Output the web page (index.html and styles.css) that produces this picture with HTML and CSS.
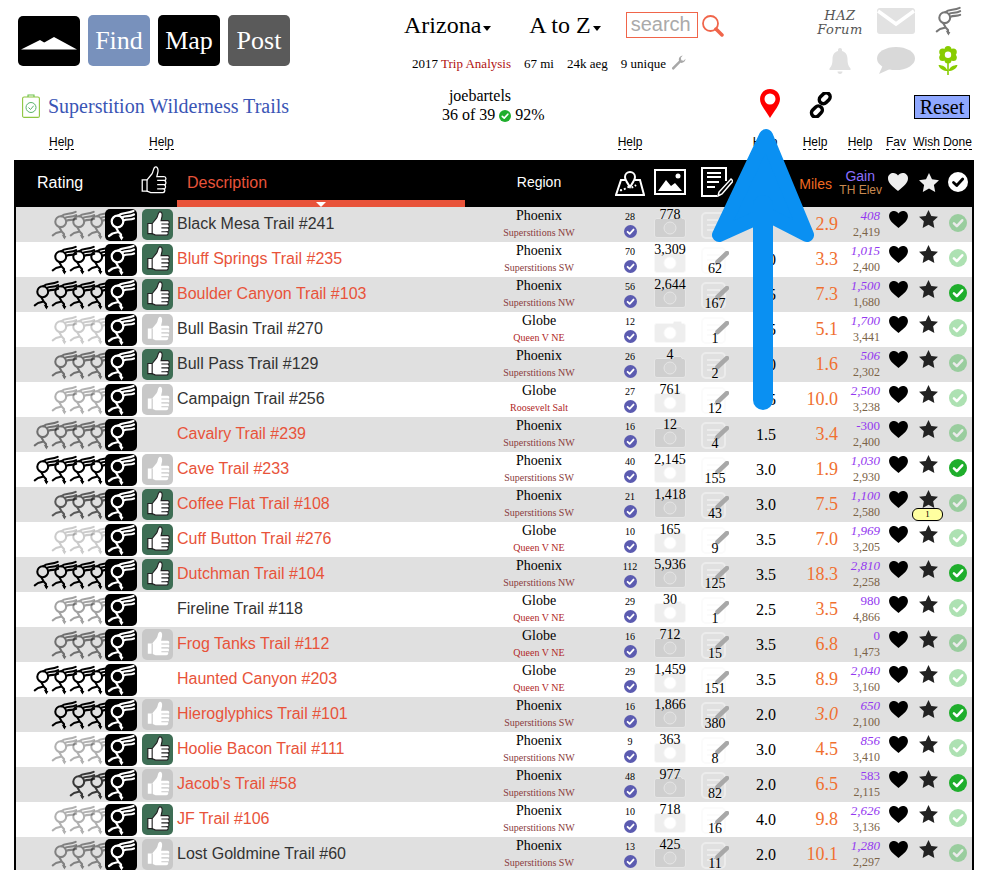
FILE: index.html
```html
<!DOCTYPE html>
<html lang="en">
<head>
<meta charset="utf-8">
<title>Superstition Wilderness Trails</title>
<link rel="stylesheet" href="styles.css">
</head>
<body>
<svg class="sprite" xmlns="http://www.w3.org/2000/svg">
  <symbol id="runner" viewBox="0 0 32 32"><g fill="none" stroke="currentColor" stroke-width="2.200" stroke-linecap="round" stroke-linejoin="round"><circle cx="12.500" cy="12.500" r="5.800"/><path d="M13 6.600C17 3 22 5 28.500 2M17 8.500C21 6 24 8.500 29 5.500M18.500 11.500C22 9.500 25 11.500 29 9.500M11 18.500l2.500 4.500-6 1.500-3.500 2.500M13.500 23l2.500 2.500v3"/></g><path d="M13.500 26l5 2-2 3.500z" fill="currentColor"/></symbol>
  <symbol id="thumb" viewBox="0 0 32 32"><path d="M6 15h4.500l4.500-5.500c1.500-2 1.200-5.500 3-6.500 2-.5 3.200 1.500 2.700 4.500l-1 4.500h6.800c2.200 0 2.200 3.500.3 3.800 2 .4 1.800 3.700-.1 4 1.700.4 1.500 3.500-.3 3.700 1.200.5 1 3.500-1.200 3.500H14l-3.500-1.500H6z" fill="var(--tf,#fff)" stroke="var(--ts,none)" stroke-width="1.200"/><path d="M20 15.500h7.500M20 19.500h7.500M20 23.500h7M10.500 15v11" fill="none" stroke="var(--tl,#222)" stroke-width="1.200"/></symbol>
  <symbol id="check" viewBox="0 0 20 20"><circle cx="10" cy="10" r="10" fill="currentColor"/><path d="M5.500 10.500l3.200 3L14.700 7" fill="none" stroke="var(--tick,#fff)" stroke-width="2.800" stroke-linecap="round" stroke-linejoin="round"/></symbol>
  <symbol id="heart" viewBox="0 0 20 18"><path d="M10 18C4 13 0 10 0 5.300 0 2 2.500 0 5.300 0 7.300 0 9 1 10 2.600 11 1 12.700 0 14.700 0 17.500 0 20 2 20 5.300 20 10 16 13 10 18z" fill="currentColor"/></symbol>
  <symbol id="star" viewBox="0 0 20 19"><path d="M10 0l3 6.300 7 .9-5.100 4.800 1.300 6.900L10 15.600l-6.200 3.300L5.100 12 0 7.200l7-.9z" fill="currentColor"/></symbol>
  <symbol id="camera" viewBox="0 0 32 22"><path d="M3 2.500h16l1-2h7l1 2h1c1.500 0 2.500 1 2.500 2.500v14c0 1.500-1 2.500-2.500 2.500H3c-1.500 0-2.500-1-2.500-2.500V5C.5 3.500 1.500 2.500 3 2.500z" fill="var(--cam)" stroke="var(--camline)"/><circle cx="16" cy="12" r="6" fill="var(--lens)" stroke="var(--camline)"/></symbol>
  <symbol id="doc" viewBox="0 0 25 27"><rect x="1" y="1" width="23" height="25" rx="4" fill="none" stroke="var(--docc)" stroke-width="2"/><path d="M6 8h13M6 13h13M6 18h9" stroke="var(--docc)" stroke-width="2"/></symbol>
  <symbol id="pencil" viewBox="0 0 16 14"><path d="M14 2L4.500 11" stroke="#a8a8a8" stroke-width="4.500" stroke-linecap="round"/><path d="M2 11.500L.5 13.500l2.500-1z" fill="#a8a8a8"/></symbol>
</svg>

<header class="top">
  <nav class="nav">
    <a class="tile logo"><svg viewBox="0 0 62 50" width="62" height="50"><path d="M3 33.500L22 24l5 3-9 6.500zM14 33.500L36 21l23 12.500z" fill="#fff"/></svg></a>
    <a class="tile find">Find</a>
    <a class="tile map">Map</a>
    <a class="tile post">Post</a>
  </nav>
  <div class="mid">
    <div class="pickers">
      <span class="picker first">Arizona<i class="caret"></i></span>
      <span class="picker">A to Z<i class="caret"></i></span>
      <span class="search">search</span>
      <svg class="lens" viewBox="0 0 22 22" width="22" height="22"><circle cx="8.500" cy="8.500" r="7.500" fill="none" stroke="#f0654a" stroke-width="1.800"/><path d="M14 14L20 20" stroke="#f0654a" stroke-width="3.500" stroke-linecap="round"/></svg>
    </div>
    <div class="stats">
      <span>2017 <em>Trip Analysis</em></span><span>67 mi</span><span>24k aeg</span>
      <span class="uniq">9 unique <svg viewBox="0 0 16 16" width="15" height="15"><path d="M1.500 13l7-7c-.7-2.500.7-5 4-5.500L10.500 3l.5 2.500 2.500.5 2-2c-.2 3-2.800 5-5.500 4.300l-7 7.200c-1 .8-2.900-1-1.500-2.500z" fill="#a8a8a8"/></svg></span>
    </div>
  </div>
  <div class="tools">
    <a class="forum">HAZ<br>Forum</a>
    <svg viewBox="0 0 38 26" width="38" height="26"><rect width="38" height="26" rx="3" fill="#e2e2e2"/><path d="M1 3l18 13L37 3" fill="none" stroke="#fff" stroke-width="3.500"/></svg>
    <svg class="gray-run" viewBox="0 0 32 32" width="30" height="30"><use href="#runner"/></svg>
    <svg class="bell" viewBox="0 0 22 26" width="22" height="26"><path d="M11 0c1.200 0 2 .8 2 2v1c4 1 5.500 4.500 5.500 8 0 5 1 7 3 9.500v1.500H.5v-1.500c2-2.500 3-4.500 3-9.500 0-3.500 1.500-7 5.500-8V2c0-1.200.8-2 2-2zM8.500 23.500h5c0 1.500-1 2.500-2.500 2.500s-2.500-1-2.500-2.500z" fill="#e0e0e0"/></svg>
    <svg viewBox="0 0 38 27" width="38" height="27"><ellipse cx="19" cy="11.500" rx="19" ry="11.500" fill="#d9d9d9"/><path d="M6 18l-4 9 11-5z" fill="#d9d9d9"/></svg>
    <svg class="flower" viewBox="0 0 20 29" width="20" height="29"><g fill="#88cc00"><circle cx="10" cy="3.500" r="3.500"/><circle cx="10" cy="14" r="3.500"/><circle cx="4.700" cy="6" r="3.500"/><circle cx="15.300" cy="6" r="3.500"/><circle cx="4.700" cy="11.500" r="3.500"/><circle cx="15.300" cy="11.500" r="3.500"/><path d="M9.200 15h1.600v14H9.200zM9.500 25C6 25 1.500 23 .5 19c4 0 8 2 9 6zM10.500 25c3.500 0 8-2 9-6-4 0-8 2-9 6z"/></g><circle cx="10" cy="8.700" r="3.200" fill="#fff"/></svg>
  </div>
</header>

<section class="titlebar">
  <h1 class="title">
    <svg viewBox="0 0 18 24" width="18" height="24"><rect x=".6" y="3" width="16.800" height="20.400" rx="1.500" fill="none" stroke="#8ec63f" stroke-width="1.100"/><path d="M6 3V1h6v2" fill="none" stroke="#6cc24a" stroke-width="1.100"/><circle cx="9" cy="13.500" r="5" fill="none" stroke="#5ab36a" stroke-width="1"/><path d="M6.500 13.500l2 2 3.200-3.800" fill="none" stroke="#5ab36a" stroke-width="1"/></svg>
    <span>Superstition Wilderness Trails</span>
  </h1>
  <div class="user"><span class="uname">joebartels</span><span class="ustat">36 of 39 <svg viewBox="0 0 20 20" width="12" height="12"><use href="#check"/></svg> 92%</span></div>
  <svg class="pin" viewBox="0 0 20 29" width="20" height="29"><path fill-rule="evenodd" d="M10 0c5.700 0 10 4.300 10 10 0 6-6 12-10 19C6 22 0 16 0 10 0 4.300 4.300 0 10 0zm0 4.500a5.500 5.500 0 1 0 0 11 5.500 5.500 0 0 0 0-11z" fill="#f00"/></svg>
  <svg class="chain" viewBox="0 0 26 26" width="26" height="26"><g fill="none" stroke="#000" stroke-width="3.500"><rect x="12.500" y="1.500" width="12" height="8" rx="4" transform="rotate(-45 18.500 8)"/><rect x="1.500" y="16" width="12" height="8" rx="4" transform="rotate(-45 7.500 18)"/></g></svg>
  <button class="reset">Reset</button>
</section>

<div class="helps grid">
  <a class="help h-rate">Help</a><a class="help h-thumb">Help</a><span></span><span></span>
  <a class="help">Help</a><span></span><span></span>
  <a class="help">Help</a><a class="help h-mile">Help</a><a class="help">Help</a>
  <a class="help h-fav">Fav</a><a class="help h-fav">Wish</a><a class="help">Done</a>
</div>

<main class="table">
  <div class="head grid">
    <span class="th-rate">Rating</span>
    <svg class="th-thumb" viewBox="5 2 25 30" width="27" height="32"><use href="#thumb" width="32" height="32"/></svg>
    <span class="th-desc">Description</span>
    <span class="th-region">Region</span>
    <svg class="th-ico" viewBox="0 0 30 30" width="30" height="30"><g fill="none" stroke="#fff" stroke-width="2"><path d="M10 13L6 13 1 28h28l-4-15h-5"/><path d="M5 23c4 1 6-3 9-3s4 1 7-2" stroke-dasharray="2 2"/><path d="M15 20c-3-5-5-7-5-10a5 5 0 0 1 10 0c0 3-2 5-5 10z"/></g></svg>
    <svg class="th-ico" viewBox="0 0 32 26" width="32" height="26"><rect x="1" y="1" width="30" height="24" fill="none" stroke="#fff" stroke-width="2"/><path d="M4 22l8-11 5 6 4-3 7 8z" fill="#fff"/><circle cx="24" cy="7" r="2.500" fill="#fff"/></svg>
    <svg class="th-ico th-note" viewBox="0 0 32 30" width="32" height="30"><path d="M25 14V1H1v28h15" fill="none" stroke="#fff" stroke-width="2"/><path d="M6 6h14M6 10h14M6 15h12M6 20h8" stroke="#fff" stroke-width="2"/><path d="M30 12l2 2-11 13-4 2 1-4z" fill="#000" stroke="#fff" stroke-width="1.500"/></svg>
    <span></span>
    <span class="th-miles">Miles</span>
    <span class="th-gain"><b>Gain</b><small>TH Elev</small></span>
    <svg class="th-fav" viewBox="0 0 20 18" width="20" height="18"><use href="#heart"/></svg>
    <svg class="th-fav" viewBox="0 0 20 19" width="20" height="19"><use href="#star"/></svg>
    <svg class="th-done" viewBox="0 0 20 20" width="20" height="20"><use href="#check"/></svg>
  </div>

  <div class="row grid"><div class="rating o45"><svg class="run"><use href="#runner"/></svg><svg class="run"><use href="#runner"/></svg><svg class="run"><use href="#runner"/></svg><svg class="box"><use href="#runner"/></svg></div><div class="tcell"><svg class="thumb up"><use href="#thumb"/></svg></div><a class="name">Black Mesa Trail #241</a><div class="region"><b>Phoenix</b><span>Superstitions NW</span></div><div class="count"><span>28</span><svg class="ok"><use href="#check"/></svg></div><div class="photo"><svg class="cam"><use href="#camera"/></svg><span>778</span></div><div class="rep"><svg class="doc"><use href="#doc"/></svg></div><div class="rate"></div><div class="miles">2.9</div><div class="gain"><i>408</i><span>2,419</span></div><div class="fav"><svg class="heart"><use href="#heart"/></svg></div><div class="fav"><svg class="star"><use href="#star"/></svg></div><div class="done"><svg class="tick soft"><use href="#check"/></svg></div></div>

  <div class="row grid"><div class="rating"><svg class="run"><use href="#runner"/></svg><svg class="run"><use href="#runner"/></svg><svg class="run"><use href="#runner"/></svg><svg class="box"><use href="#runner"/></svg></div><div class="tcell"><svg class="thumb up"><use href="#thumb"/></svg></div><a class="name hot">Bluff Springs Trail #235</a><div class="region"><b>Phoenix</b><span>Superstitions SW</span></div><div class="count"><span>70</span><svg class="ok"><use href="#check"/></svg></div><div class="photo"><svg class="cam"><use href="#camera"/></svg><span>3,309</span></div><div class="rep"><svg class="doc"><use href="#doc"/></svg><svg class="pen"><use href="#pencil"/></svg><span>62</span></div><div class="rate">3.0</div><div class="miles">3.3</div><div class="gain"><i>1,015</i><span>2,400</span></div><div class="fav"><svg class="heart"><use href="#heart"/></svg></div><div class="fav"><svg class="star"><use href="#star"/></svg></div><div class="done"><svg class="tick soft"><use href="#check"/></svg></div></div>

  <div class="row grid"><div class="rating"><svg class="run"><use href="#runner"/></svg><svg class="run"><use href="#runner"/></svg><svg class="run"><use href="#runner"/></svg><svg class="run"><use href="#runner"/></svg><svg class="box"><use href="#runner"/></svg></div><div class="tcell"><svg class="thumb up"><use href="#thumb"/></svg></div><a class="name hot">Boulder Canyon Trail #103</a><div class="region"><b>Phoenix</b><span>Superstitions NW</span></div><div class="count"><span>56</span><svg class="ok"><use href="#check"/></svg></div><div class="photo"><svg class="cam"><use href="#camera"/></svg><span>2,644</span></div><div class="rep"><svg class="doc"><use href="#doc"/></svg><svg class="pen"><use href="#pencil"/></svg><span>167</span></div><div class="rate">2.5</div><div class="miles">7.3</div><div class="gain"><i>1,500</i><span>1,680</span></div><div class="fav"><svg class="heart"><use href="#heart"/></svg></div><div class="fav"><svg class="star"><use href="#star"/></svg></div><div class="done"><svg class="tick"><use href="#check"/></svg></div></div>

  <div class="row grid"><div class="rating o20"><svg class="run"><use href="#runner"/></svg><svg class="run"><use href="#runner"/></svg><svg class="run"><use href="#runner"/></svg><svg class="box"><use href="#runner"/></svg></div><div class="tcell"><svg class="thumb no"><use href="#thumb"/></svg></div><a class="name">Bull Basin Trail #270</a><div class="region"><b>Globe</b><span class="red">Queen V NE</span></div><div class="count"><span>12</span><svg class="ok"><use href="#check"/></svg></div><div class="photo"><svg class="cam"><use href="#camera"/></svg></div><div class="rep"><svg class="doc"><use href="#doc"/></svg><svg class="pen"><use href="#pencil"/></svg><span>1</span></div><div class="rate">2.5</div><div class="miles">5.1</div><div class="gain"><i>1,700</i><span>3,441</span></div><div class="fav"><svg class="heart"><use href="#heart"/></svg></div><div class="fav"><svg class="star"><use href="#star"/></svg></div><div class="done"><svg class="tick soft"><use href="#check"/></svg></div></div>

  <div class="row grid"><div class="rating o50"><svg class="run"><use href="#runner"/></svg><svg class="run"><use href="#runner"/></svg><svg class="run"><use href="#runner"/></svg><svg class="box"><use href="#runner"/></svg></div><div class="tcell"><svg class="thumb up"><use href="#thumb"/></svg></div><a class="name">Bull Pass Trail #129</a><div class="region"><b>Phoenix</b><span>Superstitions NW</span></div><div class="count"><span>26</span><svg class="ok"><use href="#check"/></svg></div><div class="photo"><svg class="cam"><use href="#camera"/></svg><span>4</span></div><div class="rep"><svg class="doc"><use href="#doc"/></svg><svg class="pen"><use href="#pencil"/></svg><span>2</span></div><div class="rate">3.0</div><div class="miles">1.6</div><div class="gain"><i>506</i><span>2,302</span></div><div class="fav"><svg class="heart"><use href="#heart"/></svg></div><div class="fav"><svg class="star"><use href="#star"/></svg></div><div class="done"><svg class="tick soft"><use href="#check"/></svg></div></div>

  <div class="row grid"><div class="rating o30"><svg class="run"><use href="#runner"/></svg><svg class="run"><use href="#runner"/></svg><svg class="run"><use href="#runner"/></svg><svg class="box"><use href="#runner"/></svg></div><div class="tcell"><svg class="thumb no"><use href="#thumb"/></svg></div><a class="name">Campaign Trail #256</a><div class="region"><b>Globe</b><span class="red">Roosevelt Salt</span></div><div class="count"><span>27</span><svg class="ok"><use href="#check"/></svg></div><div class="photo"><svg class="cam"><use href="#camera"/></svg><span>761</span></div><div class="rep"><svg class="doc"><use href="#doc"/></svg><svg class="pen"><use href="#pencil"/></svg><span>12</span></div><div class="rate">4.5</div><div class="miles">10.0</div><div class="gain"><i>2,500</i><span>3,238</span></div><div class="fav"><svg class="heart"><use href="#heart"/></svg></div><div class="fav"><svg class="star"><use href="#star"/></svg></div><div class="done"><svg class="tick soft"><use href="#check"/></svg></div></div>

  <div class="row grid"><div class="rating o50"><svg class="run"><use href="#runner"/></svg><svg class="run"><use href="#runner"/></svg><svg class="run"><use href="#runner"/></svg><svg class="run"><use href="#runner"/></svg><svg class="box"><use href="#runner"/></svg></div><div class="tcell"></div><a class="name hot">Cavalry Trail #239</a><div class="region"><b>Phoenix</b><span>Superstitions NW</span></div><div class="count"><span>16</span><svg class="ok"><use href="#check"/></svg></div><div class="photo"><svg class="cam"><use href="#camera"/></svg><span>12</span></div><div class="rep"><svg class="doc"><use href="#doc"/></svg><svg class="pen"><use href="#pencil"/></svg><span>4</span></div><div class="rate">1.5</div><div class="miles">3.4</div><div class="gain"><i class="up">-300</i><span>2,400</span></div><div class="fav"><svg class="heart"><use href="#heart"/></svg></div><div class="fav"><svg class="star"><use href="#star"/></svg></div><div class="done"><svg class="tick soft"><use href="#check"/></svg></div></div>

  <div class="row grid"><div class="rating"><svg class="run"><use href="#runner"/></svg><svg class="run"><use href="#runner"/></svg><svg class="run"><use href="#runner"/></svg><svg class="run"><use href="#runner"/></svg><svg class="box"><use href="#runner"/></svg></div><div class="tcell"><svg class="thumb no"><use href="#thumb"/></svg></div><a class="name hot">Cave Trail #233</a><div class="region"><b>Phoenix</b><span>Superstitions SW</span></div><div class="count"><span>40</span><svg class="ok"><use href="#check"/></svg></div><div class="photo"><svg class="cam"><use href="#camera"/></svg><span>2,145</span></div><div class="rep"><svg class="doc"><use href="#doc"/></svg><svg class="pen"><use href="#pencil"/></svg><span>155</span></div><div class="rate">3.0</div><div class="miles">1.9</div><div class="gain"><i>1,030</i><span>2,930</span></div><div class="fav"><svg class="heart"><use href="#heart"/></svg></div><div class="fav"><svg class="star"><use href="#star"/></svg></div><div class="done"><svg class="tick"><use href="#check"/></svg></div></div>

  <div class="row grid"><div class="rating o60"><svg class="run"><use href="#runner"/></svg><svg class="run"><use href="#runner"/></svg><svg class="run"><use href="#runner"/></svg><svg class="box"><use href="#runner"/></svg></div><div class="tcell"><svg class="thumb up"><use href="#thumb"/></svg></div><a class="name hot">Coffee Flat Trail #108</a><div class="region"><b>Phoenix</b><span>Superstitions SW</span></div><div class="count"><span>21</span><svg class="ok"><use href="#check"/></svg></div><div class="photo"><svg class="cam"><use href="#camera"/></svg><span>1,418</span></div><div class="rep"><svg class="doc"><use href="#doc"/></svg><svg class="pen"><use href="#pencil"/></svg><span>43</span></div><div class="rate">3.0</div><div class="miles">7.5</div><div class="gain"><i>1,100</i><span>2,580</span></div><div class="fav"><svg class="heart"><use href="#heart"/></svg></div><div class="fav"><svg class="star"><use href="#star"/></svg><span class="badge">1</span></div><div class="done"><svg class="tick soft"><use href="#check"/></svg></div></div>

  <div class="row grid"><div class="rating o20"><svg class="run"><use href="#runner"/></svg><svg class="run"><use href="#runner"/></svg><svg class="run"><use href="#runner"/></svg><svg class="box"><use href="#runner"/></svg></div><div class="tcell"><svg class="thumb up"><use href="#thumb"/></svg></div><a class="name hot">Cuff Button Trail #276</a><div class="region"><b>Globe</b><span class="red">Queen V NE</span></div><div class="count"><span>10</span><svg class="ok"><use href="#check"/></svg></div><div class="photo"><svg class="cam"><use href="#camera"/></svg><span>165</span></div><div class="rep"><svg class="doc"><use href="#doc"/></svg><svg class="pen"><use href="#pencil"/></svg><span>9</span></div><div class="rate">3.5</div><div class="miles">7.0</div><div class="gain"><i>1,969</i><span>3,205</span></div><div class="fav"><svg class="heart"><use href="#heart"/></svg></div><div class="fav"><svg class="star"><use href="#star"/></svg></div><div class="done"><svg class="tick soft"><use href="#check"/></svg></div></div>

  <div class="row grid"><div class="rating"><svg class="run"><use href="#runner"/></svg><svg class="run"><use href="#runner"/></svg><svg class="run"><use href="#runner"/></svg><svg class="run"><use href="#runner"/></svg><svg class="box"><use href="#runner"/></svg></div><div class="tcell"><svg class="thumb up"><use href="#thumb"/></svg></div><a class="name hot">Dutchman Trail #104</a><div class="region"><b>Phoenix</b><span>Superstitions NW</span></div><div class="count"><span>112</span><svg class="ok"><use href="#check"/></svg></div><div class="photo"><svg class="cam"><use href="#camera"/></svg><span>5,936</span></div><div class="rep"><svg class="doc"><use href="#doc"/></svg><svg class="pen"><use href="#pencil"/></svg><span>125</span></div><div class="rate">3.5</div><div class="miles">18.3</div><div class="gain"><i>2,810</i><span>2,258</span></div><div class="fav"><svg class="heart"><use href="#heart"/></svg></div><div class="fav"><svg class="star"><use href="#star"/></svg></div><div class="done"><svg class="tick"><use href="#check"/></svg></div></div>

  <div class="row grid"><div class="rating o35"><svg class="run"><use href="#runner"/></svg><svg class="run"><use href="#runner"/></svg><svg class="run"><use href="#runner"/></svg><svg class="box"><use href="#runner"/></svg></div><div class="tcell"></div><a class="name">Fireline Trail #118</a><div class="region"><b>Globe</b><span class="red">Queen V NE</span></div><div class="count"><span>29</span><svg class="ok"><use href="#check"/></svg></div><div class="photo"><svg class="cam"><use href="#camera"/></svg><span>30</span></div><div class="rep"><svg class="doc"><use href="#doc"/></svg><svg class="pen"><use href="#pencil"/></svg><span>1</span></div><div class="rate">2.5</div><div class="miles">3.5</div><div class="gain"><i class="up">980</i><span>4,866</span></div><div class="fav"><svg class="heart"><use href="#heart"/></svg></div><div class="fav"><svg class="star"><use href="#star"/></svg></div><div class="done"><svg class="tick soft"><use href="#check"/></svg></div></div>

  <div class="row grid"><div class="rating o50"><svg class="run"><use href="#runner"/></svg><svg class="run"><use href="#runner"/></svg><svg class="run"><use href="#runner"/></svg><svg class="box"><use href="#runner"/></svg></div><div class="tcell"><svg class="thumb no"><use href="#thumb"/></svg></div><a class="name hot">Frog Tanks Trail #112</a><div class="region"><b>Globe</b><span class="red">Queen V NE</span></div><div class="count"><span>16</span><svg class="ok"><use href="#check"/></svg></div><div class="photo"><svg class="cam"><use href="#camera"/></svg><span>712</span></div><div class="rep"><svg class="doc"><use href="#doc"/></svg><svg class="pen"><use href="#pencil"/></svg><span>15</span></div><div class="rate">3.5</div><div class="miles">6.8</div><div class="gain"><i class="up">0</i><span>1,473</span></div><div class="fav"><svg class="heart"><use href="#heart"/></svg></div><div class="fav"><svg class="star"><use href="#star"/></svg></div><div class="done"><svg class="tick soft"><use href="#check"/></svg></div></div>

  <div class="row grid"><div class="rating"><svg class="run"><use href="#runner"/></svg><svg class="run"><use href="#runner"/></svg><svg class="run"><use href="#runner"/></svg><svg class="run"><use href="#runner"/></svg><svg class="box"><use href="#runner"/></svg></div><div class="tcell"></div><a class="name hot">Haunted Canyon #203</a><div class="region"><b>Globe</b><span class="red">Queen V NE</span></div><div class="count"><span>29</span><svg class="ok"><use href="#check"/></svg></div><div class="photo"><svg class="cam"><use href="#camera"/></svg><span>1,459</span></div><div class="rep"><svg class="doc"><use href="#doc"/></svg><svg class="pen"><use href="#pencil"/></svg><span>151</span></div><div class="rate">3.5</div><div class="miles">8.9</div><div class="gain"><i>2,040</i><span>3,160</span></div><div class="fav"><svg class="heart"><use href="#heart"/></svg></div><div class="fav"><svg class="star"><use href="#star"/></svg></div><div class="done"><svg class="tick soft"><use href="#check"/></svg></div></div>

  <div class="row grid"><div class="rating"><svg class="run"><use href="#runner"/></svg><svg class="run"><use href="#runner"/></svg><svg class="run"><use href="#runner"/></svg><svg class="box"><use href="#runner"/></svg></div><div class="tcell"><svg class="thumb no"><use href="#thumb"/></svg></div><a class="name hot">Hieroglyphics Trail #101</a><div class="region"><b>Phoenix</b><span>Superstitions SW</span></div><div class="count"><span>16</span><svg class="ok"><use href="#check"/></svg></div><div class="photo"><svg class="cam"><use href="#camera"/></svg><span>1,866</span></div><div class="rep"><svg class="doc"><use href="#doc"/></svg><svg class="pen"><use href="#pencil"/></svg><span>380</span></div><div class="rate">2.0</div><div class="miles it">3.0</div><div class="gain"><i>650</i><span>2,100</span></div><div class="fav"><svg class="heart"><use href="#heart"/></svg></div><div class="fav"><svg class="star"><use href="#star"/></svg></div><div class="done"><svg class="tick"><use href="#check"/></svg></div></div>

  <div class="row grid"><div class="rating o30"><svg class="run"><use href="#runner"/></svg><svg class="run"><use href="#runner"/></svg><svg class="run"><use href="#runner"/></svg><svg class="box"><use href="#runner"/></svg></div><div class="tcell"><svg class="thumb up"><use href="#thumb"/></svg></div><a class="name hot">Hoolie Bacon Trail #111</a><div class="region"><b>Phoenix</b><span>Superstitions NW</span></div><div class="count"><span>9</span><svg class="ok"><use href="#check"/></svg></div><div class="photo"><svg class="cam"><use href="#camera"/></svg><span>363</span></div><div class="rep"><svg class="doc"><use href="#doc"/></svg><svg class="pen"><use href="#pencil"/></svg><span>8</span></div><div class="rate">3.0</div><div class="miles">4.5</div><div class="gain"><i>856</i><span>3,410</span></div><div class="fav"><svg class="heart"><use href="#heart"/></svg></div><div class="fav"><svg class="star"><use href="#star"/></svg></div><div class="done"><svg class="tick soft"><use href="#check"/></svg></div></div>

  <div class="row grid"><div class="rating o75"><svg class="run"><use href="#runner"/></svg><svg class="run"><use href="#runner"/></svg><svg class="box"><use href="#runner"/></svg></div><div class="tcell"><svg class="thumb no"><use href="#thumb"/></svg></div><a class="name hot">Jacob's Trail #58</a><div class="region"><b>Phoenix</b><span>Superstitions NW</span></div><div class="count"><span>48</span><svg class="ok"><use href="#check"/></svg></div><div class="photo"><svg class="cam"><use href="#camera"/></svg><span>977</span></div><div class="rep"><svg class="doc"><use href="#doc"/></svg><svg class="pen"><use href="#pencil"/></svg><span>82</span></div><div class="rate">2.0</div><div class="miles">6.5</div><div class="gain"><i class="up">583</i><span>2,115</span></div><div class="fav"><svg class="heart"><use href="#heart"/></svg></div><div class="fav"><svg class="star"><use href="#star"/></svg></div><div class="done"><svg class="tick"><use href="#check"/></svg></div></div>

  <div class="row grid"><div class="rating o30"><svg class="run"><use href="#runner"/></svg><svg class="run"><use href="#runner"/></svg><svg class="run"><use href="#runner"/></svg><svg class="box"><use href="#runner"/></svg></div><div class="tcell"><svg class="thumb up"><use href="#thumb"/></svg></div><a class="name hot">JF Trail #106</a><div class="region"><b>Phoenix</b><span>Superstitions NW</span></div><div class="count"><span>10</span><svg class="ok"><use href="#check"/></svg></div><div class="photo"><svg class="cam"><use href="#camera"/></svg><span>718</span></div><div class="rep"><svg class="doc"><use href="#doc"/></svg><svg class="pen"><use href="#pencil"/></svg><span>16</span></div><div class="rate">4.0</div><div class="miles">9.8</div><div class="gain"><i>2,626</i><span>3,136</span></div><div class="fav"><svg class="heart"><use href="#heart"/></svg></div><div class="fav"><svg class="star"><use href="#star"/></svg></div><div class="done"><svg class="tick soft"><use href="#check"/></svg></div></div>

  <div class="row grid"><div class="rating o45"><svg class="run"><use href="#runner"/></svg><svg class="run"><use href="#runner"/></svg><svg class="run"><use href="#runner"/></svg><svg class="box"><use href="#runner"/></svg></div><div class="tcell"><svg class="thumb no"><use href="#thumb"/></svg></div><a class="name">Lost Goldmine Trail #60</a><div class="region"><b>Phoenix</b><span>Superstitions SW</span></div><div class="count"><span>13</span><svg class="ok"><use href="#check"/></svg></div><div class="photo"><svg class="cam"><use href="#camera"/></svg><span>425</span></div><div class="rep"><svg class="doc"><use href="#doc"/></svg><svg class="pen"><use href="#pencil"/></svg><span>11</span></div><div class="rate">2.0</div><div class="miles">10.1</div><div class="gain"><i>1,280</i><span>2,297</span></div><div class="fav"><svg class="heart"><use href="#heart"/></svg></div><div class="fav"><svg class="star"><use href="#star"/></svg></div><div class="done"><svg class="tick soft"><use href="#check"/></svg></div></div>
</main>

<svg class="arrow" viewBox="0 0 988 870" width="988" height="870"><path d="M766 136L807 235 766 214 719 235z" fill="#0a90f2" stroke="#0a90f2" stroke-width="14" stroke-linejoin="round"/><path d="M763 205V400" fill="none" stroke="#0a90f2" stroke-width="20" stroke-linecap="round"/></svg>
</body>
</html>
```
FILE: styles.css
```css
* { box-sizing: border-box; }
html { overflow: hidden; }
body {
  margin: 0;
  position: relative;
  background: #fff;
  color: #000;
  font-family: "Liberation Serif", serif;
}
.sprite { display: none; }
.arrow { position: absolute; left: 0; top: 0; pointer-events: none; }

/* Top bar */
.top {
  display: grid;
  grid-template-columns: 404px 424px 1fr;
  height: 85px;
}
.nav { display: flex; gap: 8px; padding: 15px 0 0 18px; align-items: flex-start; }
.tile {
  width: 62px;
  height: 51px;
  border-radius: 5px;
  color: #fff;
  font-size: 26px;
  line-height: 51px;
  text-align: center;
}
.logo { background: #000; height: 50px; margin-top: 1px; display: block; line-height: 0; }
.find { background: #7891bc; }
.map { background: #000; }
.post { background: #5a5a5a; }

.pickers { display: flex; align-items: center; height: 26px; margin-top: 12px; }
.picker { font-size: 24px; line-height: 26px; display: flex; align-items: center; margin-right: 38px; }
.picker + .picker { margin-right: 25px; }
.caret {
  width: 0;
  height: 0;
  margin: 7px 0 0 2px;
  border-left: 4.5px solid transparent;
  border-right: 4.5px solid transparent;
  border-top: 5px solid #000;
}
.search {
  width: 72px;
  height: 26px;
  border: 1px solid #f0654a;
  font: 20px/23px "Liberation Sans", sans-serif;
  color: #aaa;
  padding-left: 4px;
}
.lens { margin: 2px 0 0 4px; }
.stats {
  display: flex;
  gap: 13px;
  align-items: center;
  margin: 17px 0 0 8px;
  font-size: 13px;
  line-height: 16px;
}
.stats em { font-style: normal; color: #b01010; }
.uniq svg { vertical-align: -2px; margin-left: 2px; }

.tools {
  display: grid;
  grid-template-columns: 49px 38px 66px;
  grid-template-rows: 26px 29px;
  row-gap: 12px;
  padding-top: 8px;
  justify-items: center;
  align-items: center;
}
.forum {
  font: italic 13px/14px "DejaVu Serif", serif;
  color: #555;
  text-align: center;
  white-space: nowrap;
  letter-spacing: .5px;
  margin: 3px 25px 0 0;
}
.bell { margin-right: 25px; }
.gray-run { color: #777; }
.flower { margin-top: -1px; }

/* Title row */
.titlebar {
  display: flex;
  height: 50px;
  align-items: flex-start;
}
.title {
  display: flex;
  align-items: center;
  gap: 8px;
  width: 420px;
  margin: 0;
  padding: 7px 0 0 22px;
  font-size: 20px;
  line-height: 28px;
  font-weight: normal;
  color: #3a55b5;
  white-space: nowrap;
}
.user { width: 120px; margin-top: 1px; font-size: 16px; line-height: 19px; text-align: center; white-space: nowrap; }
.uname, .ustat { display: block; }
.ustat { margin-left: 22px; text-align: left; }
.user svg { color: #1fae2c; vertical-align: -2px; }
.pin { margin: 4px 0 0 220px; }
.chain { margin: 7px 0 0 28px; }
.reset {
  width: 56px;
  height: 24px;
  margin: 10px 0 0 80px;
  padding: 0;
  background: #8fa8ff;
  border: 1px solid #000;
  font: 20px/22px "Liberation Serif", serif;
  color: #000;
}

/* Shared columns */
.grid {
  display: grid;
  grid-template-columns: 123px 36px 293px 142px 40px 40px 50px 50px 48px 44px 32px 29px 29px;
}

.helps {
  width: 960px;
  height: 25px;
  margin-left: 14px;
  padding: 0 2px;
  font: 12px/14px "Liberation Sans", sans-serif;
  justify-items: center;
  align-items: start;
}
.help { border-bottom: 1px dashed #000; color: #000; }
.h-rate { justify-self: start; margin-left: 33px; }
.h-thumb { justify-self: start; margin-left: 10px; }
.h-mile { margin-left: 2px; }
.h-fav { margin-right: 4px; }

/* Table */
.table {
  width: 960px;
  margin-left: 14px;
  border-left: 2px solid #000;
  border-right: 2px solid #000;
}
.head {
  height: 47px;
  margin: 0 -2px;
  padding: 0 2px;
  background: #000;
  color: #fff;
  font: 14px/16px "Liberation Sans", sans-serif;
  align-items: center;
}
.th-rate { font-size: 16px; padding: 0 0 2px 21px; }
.th-thumb { --tf: #000; --ts: #fff; --tl: #fff; margin: -3px 0 0 2px; }
.th-desc {
  position: relative;
  align-self: stretch;
  margin: 0 3px 0 2px;
  padding: 15px 0 0 10px;
  border-bottom: 7px solid #e8533a;
  color: #e8533a;
  font-size: 16px;
}
.th-desc::after {
  content: "";
  position: absolute;
  left: 139px;
  bottom: -7px;
  border-left: 5px solid transparent;
  border-right: 5px solid transparent;
  border-top: 5px solid #fff;
}
.th-region { text-align: center; padding-bottom: 4px; }
.th-ico { justify-self: center; margin-top: -4px; }
.th-note { margin-left: 4px; }
.th-miles { color: #f06a20; text-align: right; padding: 0 6px 0 0; white-space: nowrap; }
.th-gain { display: flex; flex-direction: column; align-items: flex-end; white-space: nowrap; margin-top: -3px; }
.th-gain b { font-weight: normal; color: #8a70ff; margin-right: 7px; }
.th-gain small { font-size: 12px; line-height: 13px; color: #c88a50; }
.th-fav { justify-self: center; margin-top: -3px; color: #eee; }
.th-done { justify-self: center; margin-top: -3px; color: #fff; --tick: #000; }

.row {
  height: 35px;
  --cam: #eeeeee;
  --camline: #f8f8f8;
  --lens: #fff;
  --docc: #fbfbfb;
}
.row:nth-child(even) {
  background: #e0e0e0;
  --cam: #cfcfcf;
  --camline: #e6e6e6;
  --lens: #d4d4d4;
  --docc: #ececec;
}

.rating { display: flex; justify-content: flex-end; align-items: center; padding-right: 2px; color: #000; }
.run { width: 30px; height: 30px; margin-right: -12px; flex: none; }
.box {
  width: 32px;
  height: 32px;
  margin-left: 2px;
  position: relative;
  background: #000;
  border-radius: 5px;
  color: #fff;
  flex: none;
}
.o20 .run { opacity: .2; }
.o30 .run { opacity: .3; }
.o35 .run { opacity: .36; }
.o45 .run { opacity: .42; }
.o50 .run { opacity: .5; }
.o60 .run { opacity: .6; }
.o75 .run { opacity: .75; }

.tcell { display: flex; justify-content: center; align-items: center; }
.thumb { width: 31px; height: 31px; border-radius: 5px; }
.thumb.up { background: #3e6e55; --ts: #222; --tl: #222; }
.thumb.no { background: #c8c8c8; --tl: #c8c8c8; }

.name {
  padding-left: 2px;
  font: 16px/33px "Liberation Sans", sans-serif;
  color: #333;
  white-space: nowrap;
}
.name.hot { color: #e8533a; }

.region { display: flex; flex-direction: column; align-items: center; padding-top: 1px; }
.region b { font-weight: normal; font-size: 14px; line-height: 16px; }
.region span { font-size: 10px; line-height: 12px; margin-top: 3px; color: #8a3c3c; }
.region span.red { color: #b02828; }

.count { display: flex; flex-direction: column; align-items: center; font-size: 10px; line-height: 12px; padding-top: 4px; }
.ok { width: 13px; height: 13px; margin-top: 2px; color: #5b5bb0; }

.photo { display: grid; justify-items: center; font-size: 14px; line-height: 15px; }
.photo > * { grid-area: 1 / 1; }
.cam { width: 32px; height: 22px; margin-top: 9px; }
.photo span { white-space: nowrap; }

.rep { display: grid; justify-items: center; font-size: 14px; line-height: 15px; }
.rep > * { grid-area: 1 / 1; }
.doc { width: 25px; height: 27px; margin: 5px 4px 0 0; }
.pen { width: 16px; height: 14px; margin: 9px 0 0 12px; overflow: visible; }
.rep span { margin-top: 19px; }

.rate { font-size: 16px; line-height: 35px; text-align: center; padding-left: 2px; }
.miles { font-size: 18px; line-height: 35px; text-align: right; color: #f07030; }
.miles.it { font-style: italic; }

.gain { display: flex; flex-direction: column; align-items: flex-end; padding-right: 2px; font-size: 12px; line-height: 14px; padding-top: 2px; }
.gain i { color: #9438f0; font-size: 13px; }
.gain i.up { font-style: normal; }
.gain span { margin-top: 2px; color: #7b6347; }

.fav { position: relative; display: flex; justify-content: center; align-items: flex-start; padding-top: 4px; }
.heart { width: 19px; height: 17px; color: #000; }
.star { width: 19px; height: 18px; margin-top: -1px; color: #222; }
.badge {
  position: absolute;
  left: -2px;
  top: 21px;
  width: 31px;
  height: 13px;
  border: 1px solid #000;
  border-radius: 6px;
  background: #ffffa0;
  font-size: 9px;
  line-height: 11px;
  text-align: center;
}
.done { display: flex; justify-content: center; padding-top: 7px; }
.tick { width: 18px; height: 18px; color: #1fae2c; }
.tick.soft { opacity: .36; }
```
